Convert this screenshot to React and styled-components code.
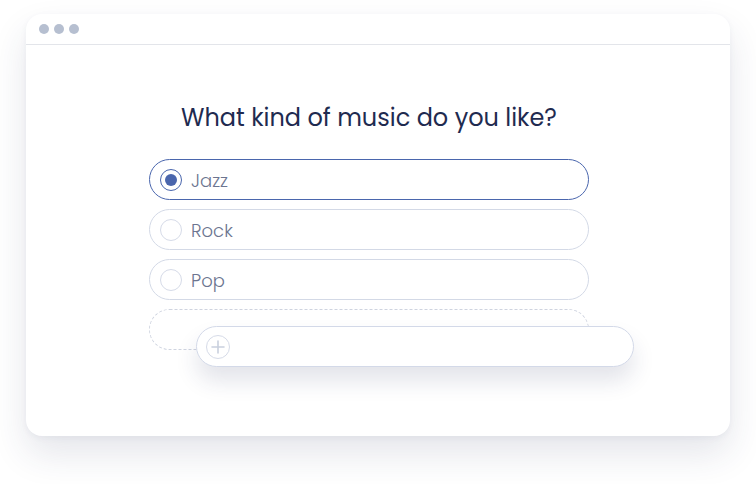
import React from "react";
import styled, { createGlobalStyle } from "styled-components";

const GlobalStyle = createGlobalStyle`
  html, body {
    margin: 0;
    padding: 0;
    background: #ffffff;
    font-family: "Poppins", "Inter", "Noto Sans", sans-serif;
  }
`;

const Page = styled.div`
  width: 756px;
  height: 484px;
  padding: 14px 0 0 26px;
  box-sizing: border-box;
`;

const Window = styled.div`
  width: 704px;
  height: 422px;
  background: #fff;
  border-radius: 16px;
  box-shadow: 0 18px 36px rgba(40, 50, 90, 0.12), 0 2px 6px rgba(40, 50, 90, 0.05);
  display: flex;
  flex-direction: column;
  overflow: hidden;
`;

const TitleBar = styled.div`
  height: 30px;
  flex: none;
  display: flex;
  align-items: center;
  gap: 5px;
  padding-left: 13px;
  border-bottom: 1px solid #e3e5ea;
`;

const Dot = styled.span`
  width: 10px;
  height: 10px;
  border-radius: 50%;
  background: #b6bfd0;
`;

const Body = styled.div`
  flex: 1;
  display: flex;
  flex-direction: column;
  align-items: center;
  padding: 55px 18px 0 0;
`;

const Question = styled.h1`
  margin: 0 0 23px;
  font-size: 24px;
  line-height: 36px;
  font-weight: 400;
  color: #1f2b50;
`;

const Options = styled.div`
  width: 440px;
  display: flex;
  flex-direction: column;
  gap: 9px;
  position: relative;
`;

const Option = styled.div`
  height: 41px;
  box-sizing: border-box;
  border-radius: 21px;
  border: 1px ${(p) => (p.$dashed ? "dashed" : "solid")}
    ${(p) => (p.$active ? "#4a66ad" : p.$dashed ? "#cfd4e0" : "#d3d9e6")};
  background: ${(p) => (p.$dashed ? "transparent" : "#fff")};
  display: flex;
  align-items: center;
  padding-left: 10px;
  gap: 9px;
`;

const Radio = styled.span`
  width: 22px;
  height: 22px;
  box-sizing: border-box;
  border-radius: 50%;
  border: 1.5px solid ${(p) => (p.$checked ? "#4a66ad" : "#d6dbe8")};
  display: flex;
  align-items: center;
  justify-content: center;
  &::after {
    content: "";
    display: ${(p) => (p.$checked ? "block" : "none")};
    width: 12px;
    height: 12px;
    border-radius: 50%;
    background: #4a66ad;
  }
`;

const Label = styled.span`
  font-size: 18px;
  font-weight: 300;
  color: #6c7590;
  padding-top: 1px;
`;

const Dragged = styled.div`
  position: absolute;
  left: 47px;
  top: 167px;
  width: 438px;
  height: 41px;
  box-sizing: border-box;
  border-radius: 21px;
  border: 1px solid #d3d9e8;
  background: #fff;
  box-shadow: 0 14px 22px rgba(40, 50, 90, 0.13);
  display: flex;
  align-items: center;
  padding-left: 9px;
`;

const PlusCircle = styled.span`
  width: 24px;
  height: 24px;
  box-sizing: border-box;
  border-radius: 50%;
  border: 1.5px solid #d6dbe8;
  display: flex;
  align-items: center;
  justify-content: center;
`;

const options = [
  { label: "Jazz", checked: true },
  { label: "Rock" },
  { label: "Pop" },
];

export default function App() {
  return (
    <>
      <GlobalStyle />
      <Page>
        <Window>
          <TitleBar>
            <Dot />
            <Dot />
            <Dot />
          </TitleBar>
          <Body>
            <Question>What kind of music do you like?</Question>
            <Options>
              {options.map((o) => (
                <Option key={o.label} $active={o.checked}>
                  <Radio $checked={o.checked} />
                  <Label>{o.label}</Label>
                </Option>
              ))}
              <Option $dashed />
              <Dragged>
                <PlusCircle>
                  <svg width="14" height="14" viewBox="0 0 14 14">
                    <path d="M7 1v12M1 7h12" stroke="#c9d0de" strokeWidth="1.6" strokeLinecap="round" />
                  </svg>
                </PlusCircle>
              </Dragged>
            </Options>
          </Body>
        </Window>
      </Page>
    </>
  );
}
